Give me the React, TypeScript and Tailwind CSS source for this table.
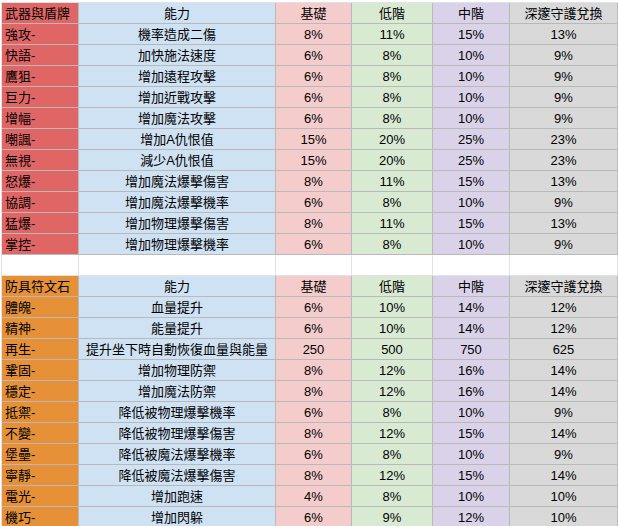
import React from "react";

type Row = [string, string, string, string, string, string];

const weaponRows: Row[] = [
  ["武器與盾牌", "能力", "基礎", "低階", "中階", "深邃守護兌換"],
  ["強攻-", "機率造成二傷", "8%", "11%", "15%", "13%"],
  ["快語-", "加快施法速度", "6%", "8%", "10%", "9%"],
  ["鷹狙-", "增加遠程攻擊", "6%", "8%", "10%", "9%"],
  ["巨力-", "增加近戰攻擊", "6%", "8%", "10%", "9%"],
  ["增幅-", "增加魔法攻擊", "6%", "8%", "10%", "9%"],
  ["嘲諷-", "增加A仇恨值", "15%", "20%", "25%", "23%"],
  ["無視-", "減少A仇恨值", "15%", "20%", "25%", "23%"],
  ["怒爆-", "增加魔法爆擊傷害", "8%", "11%", "15%", "13%"],
  ["協調-", "增加魔法爆擊機率", "6%", "8%", "10%", "9%"],
  ["猛爆-", "增加物理爆擊傷害", "8%", "11%", "15%", "13%"],
  ["掌控-", "增加物理爆擊機率", "6%", "8%", "10%", "9%"],
];

const armorRows: Row[] = [
  ["防具符文石", "能力", "基礎", "低階", "中階", "深邃守護兌換"],
  ["體魄-", "血量提升", "6%", "10%", "14%", "12%"],
  ["精神-", "能量提升", "6%", "10%", "14%", "12%"],
  ["再生-", "提升坐下時自動恢復血量與能量", "250", "500", "750", "625"],
  ["鞏固-", "增加物理防禦", "8%", "12%", "16%", "14%"],
  ["穩定-", "增加魔法防禦", "8%", "12%", "16%", "14%"],
  ["抵禦-", "降低被物理爆擊機率", "6%", "8%", "10%", "9%"],
  ["不變-", "降低被物理爆擊傷害", "8%", "12%", "15%", "14%"],
  ["堡壘-", "降低被魔法爆擊機率", "6%", "8%", "10%", "9%"],
  ["寧靜-", "降低被魔法爆擊傷害", "8%", "12%", "15%", "14%"],
  ["電光-", "增加跑速", "4%", "8%", "10%", "10%"],
  ["機巧-", "增加閃躲", "6%", "9%", "12%", "10%"],
];

// column backgrounds for columns B..F
const colBg = [
  "bg-[#cfe2f3]",
  "bg-[#f4cccc]",
  "bg-[#d9ead3]",
  "bg-[#d9d2e9]",
  "bg-[#d9d9d9]",
];

const cell =
  "h-[21px] border-b border-r border-[#b9b9b9] flex items-center pt-[2px] whitespace-nowrap overflow-hidden";

const Section = ({ rows, firstBg }: { rows: Row[]; firstBg: string }) => (
  <>
    {rows.map((row, r) => (
      <React.Fragment key={r}>
        <div className={`${cell} ${firstBg} pl-[3px]`}>{row[0]}</div>
        {row.slice(1).map((v, c) => (
          <div key={c} className={`${cell} ${colBg[c]} justify-center`}>
            {v}
          </div>
        ))}
      </React.Fragment>
    ))}
  </>
);

const EmptyRow = () => (
  <>
    {[0, 1, 2, 3, 4, 5].map((i) => (
      <div key={i} className="h-[21px] border-b border-r border-[#e2e2e2] bg-white" />
    ))}
  </>
);

export default function App() {
  return (
    <div className="w-[618px] h-[526px] overflow-hidden bg-white">
      <div
        className="mt-[2px] ml-px border-t border-l border-[#e2e2e2] grid grid-cols-[77px_197px_76px_81px_77px_1fr] text-[13px] text-black"
        style={{ fontFamily: '"Liberation Sans", "Noto Sans CJK TC", sans-serif' }}
      >
        <Section rows={weaponRows} firstBg="bg-[#e06666]" />
        <EmptyRow />
        <Section rows={armorRows} firstBg="bg-[#e69138]" />
      </div>
    </div>
  );
}
